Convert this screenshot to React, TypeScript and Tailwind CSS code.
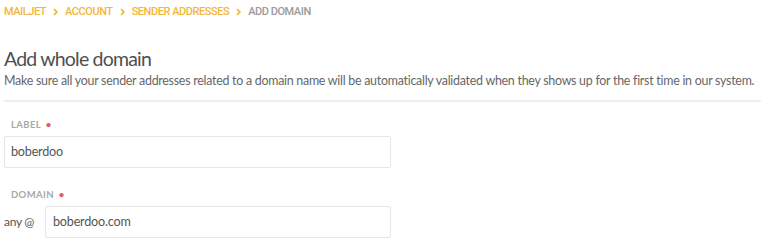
function Chevron() {
  return (
    <svg width="5" height="8" viewBox="0 0 5 8" className="mx-[7px]" aria-hidden>
      <path d="M1 1 L3.8 4 L1 7" fill="none" stroke="#f4b63a" strokeWidth="1.8" />
    </svg>
  )
}

export default function App() {
  const crumbs = ["Mailjet", "Account", "Sender addresses"]
  return (
    <div className="h-[242px] w-[761px] overflow-hidden bg-white pl-1 font-['Lato',sans-serif] text-[#555]">
      {/* Breadcrumb */}
      <nav className="flex h-[23px] items-center font-['Roboto',sans-serif] text-[11px] font-medium uppercase leading-none tracking-[-0.45px]">
        {crumbs.map((c) => (
          <span key={c} className="flex items-center text-[#f4b63a]">
            {c}
            <Chevron />
          </span>
        ))}
        <span className="text-[#9a9a9a]">Add domain</span>
      </nav>

      {/* Header */}
      <div className="pt-[24px]">
        <h1 className="text-[19.5px] leading-[24px] tracking-[-0.8px] text-[#4f4f4f]">Add whole domain</h1>
        <p className="mt-[2px] whitespace-nowrap text-[12.4px] leading-[16px] tracking-[-0.25px] text-[#666]">
          Make sure all your sender addresses related to a domain name will be automatically validated when they shows up for the first time in our system.
        </p>
      </div>
      <div className="mt-[11px] h-[2px] bg-[#eeeeee]" />

      {/* Form */}
      <div className="pt-[17px]">
        <label className="block pl-[7px] text-[9.5px] font-bold uppercase leading-[12px] tracking-[0.4px] text-[#a8a8a8]">
          Label <span className="ml-[2px] text-[#e25c5c]">•</span>
        </label>
        <div className="mt-[5px] flex h-[32px] w-[387px] items-center rounded-[2px] border border-[#e6e6e6] px-[6px] text-[12.6px] tracking-[-0.2px] text-[#555]">
          boberdoo
        </div>

        <label className="mt-[21px] block pl-[7px] text-[9.5px] font-bold uppercase leading-[12px] tracking-[0.4px] text-[#a8a8a8]">
          Domain <span className="ml-[2px] text-[#e25c5c]">•</span>
        </label>
        <div className="mt-[5px] flex items-center">
          <span className="w-[41px] text-[12px] tracking-[-0.3px] text-[#555]">any @</span>
          <div className="flex h-[32px] w-[346px] items-center rounded-[2px] border border-[#e6e6e6] px-[7px] text-[12.6px] tracking-[-0.2px] text-[#555]">
            boberdoo.com
          </div>
        </div>
      </div>
    </div>
  )
}
